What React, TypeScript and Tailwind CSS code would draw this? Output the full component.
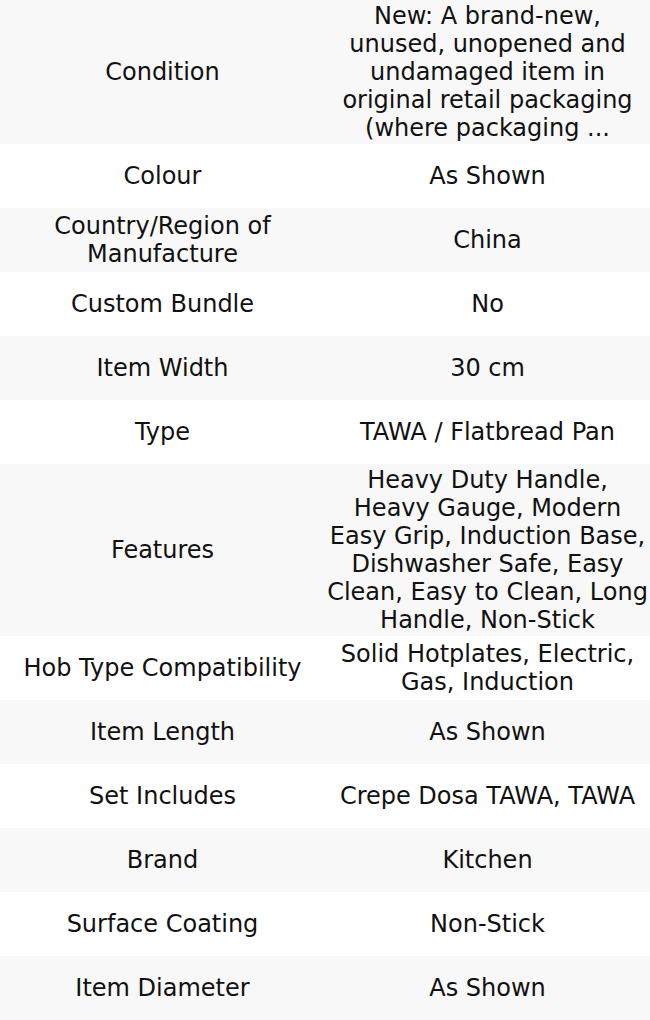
import React from "react";

const rows: [string, string][] = [
  ["Condition", "New: A brand-new, unused, unopened and undamaged item in original retail packaging (where packaging ..."],
  ["Colour", "As Shown"],
  ["Country/Region of Manufacture", "China"],
  ["Custom Bundle", "No"],
  ["Item Width", "30 cm"],
  ["Type", "TAWA / Flatbread Pan"],
  ["Features", "Heavy Duty Handle, Heavy Gauge, Modern Easy Grip, Induction Base, Dishwasher Safe, Easy Clean, Easy to Clean, Long Handle, Non-Stick"],
  ["Hob Type Compatibility", "Solid Hotplates, Electric, Gas, Induction"],
  ["Item Length", "As Shown"],
  ["Set Includes", "Crepe Dosa TAWA, TAWA"],
  ["Brand", "Kitchen"],
  ["Surface Coating", "Non-Stick"],
  ["Item Diameter", "As Shown"],
];

export default function App() {
  return (
    <div
      className="w-[650px] bg-white text-[#111111] text-[24px] leading-[28px]"
      style={{ fontFamily: '"DejaVu Sans", sans-serif' }}
    >
      {rows.map(([k, v], i) => (
        <div
          key={k}
          className={`grid grid-cols-2 min-h-[64px] ${i % 2 === 0 ? "bg-[#f8f8f8]" : "bg-white"}`}
        >
          <div className="flex items-center justify-center text-center p-[2px]">{k}</div>
          <div className="flex items-center justify-center text-center p-[2px]">{v}</div>
        </div>
      ))}
    </div>
  );
}
